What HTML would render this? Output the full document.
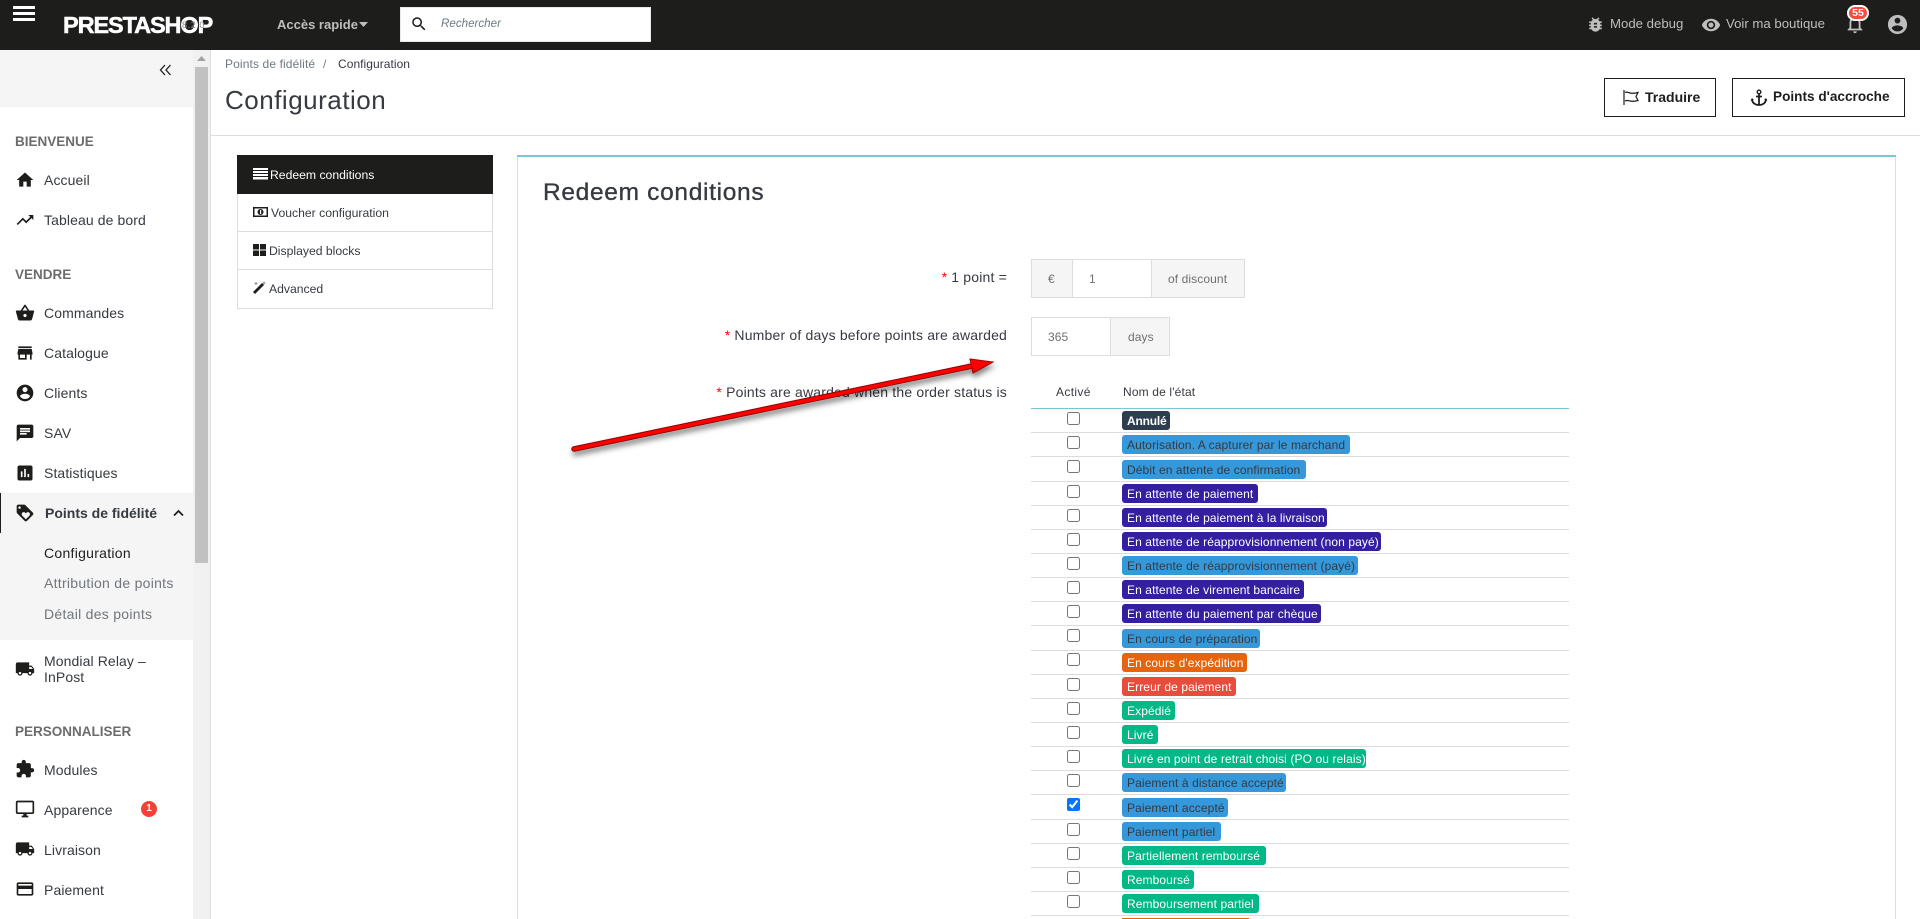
<!DOCTYPE html>
<html lang="fr"><head><meta charset="utf-8"><title>Configuration</title>
<style>
html,body{margin:0;padding:0;width:1920px;height:919px;overflow:hidden;background:#fff;font-family:"Liberation Sans",sans-serif;color:#363a41}
div,span,svg,input{position:absolute;box-sizing:border-box}
#w{left:0;top:0;width:1920px;height:919px;overflow:hidden}
.t{white-space:nowrap;line-height:20px;font-size:14px}
.si{left:44px;color:#363a41;letter-spacing:.1px}
.h{left:15px;font-weight:bold;color:#6c6c6c;font-size:13.500px;letter-spacing:0}
.ic{left:15px;width:20px;height:20px;fill:#1d1d1b}
.sub{left:44px;color:#70767c;font-size:14px;letter-spacing:.28px}
.top{color:#bebebe;font-size:13.200px;top:14px}
.mn{font-size:12.200px;color:#363a41}
.bd{border:1px solid #ddd}
.ad{background:#f5f5f5}
.f{font-size:12px;color:#6f6f6f;line-height:20px;white-space:nowrap;letter-spacing:.1px}
.l{left:1031px;width:538px;height:1px;background:#dcdcdc}
.c{left:1067px;width:13px;height:13px;margin:0}
.b{left:1122px;height:19px;border-radius:3px;font-size:12px;line-height:20px;padding-left:5px;white-space:nowrap;overflow:hidden;letter-spacing:.1px;color:#fff}
.bl{background:#3498db;color:#363a41}.pu{background:#34209e}.gr{background:#01b887}
.or{background:#e8640c}.re{background:#e74c3c}.dk{background:#2c3e50}
.lb{right:913px;font-size:14px;letter-spacing:.18px;line-height:20px;white-space:nowrap;color:#363a41}
.lb b{color:#f00;font-weight:normal}
</style></head><body>
<div id="w">

<!-- header -->
<div style="left:0;top:0;width:1920px;height:50px;background:#1d1d1b"></div>
<div style="left:13px;top:6px;width:22px;height:3px;background:#fff"></div>
<div style="left:13px;top:12px;width:22px;height:3px;background:#fff"></div>
<div style="left:13px;top:18px;width:22px;height:3px;background:#fff"></div>
<div style="left:63px;top:12px;font-size:23.500px;line-height:27px;font-weight:bold;color:#fff;letter-spacing:-1.100px;-webkit-text-stroke:.5px #fff;white-space:nowrap">PRESTASHOP</div>
<div class="t" style="left:182px;top:15px;font-size:9px;color:#8a8a8a;letter-spacing:.6px">8.2.0</div>
<div class="t" style="left:277px;top:15px;color:#bebebe;font-size:13px;font-weight:bold">Accès rapide</div>
<svg style="left:359px;top:22px" width="10" height="6"><path d="M0 0h9L4.500 5z" fill="#bebebe"/></svg>
<div style="left:400px;top:7px;width:251px;height:35px;background:#fff;border:1px solid #e8e8e8"></div>
<svg style="left:410px;top:15px" width="18" height="18" viewBox="0 0 24 24"><path d="M15.500 14h-.79l-.28-.27C15.410 12.590 16 11.110 16 9.500 16 5.910 13.090 3 9.500 3S3 5.910 3 9.500 5.910 16 9.500 16c1.610 0 3.090-.59 4.230-1.570l.27.28v.79l5 4.990L20.490 19l-4.990-5zm-6 0C7.010 14 5 11.990 5 9.500S7.010 5 9.500 5 14 7.010 14 9.500 11.990 14 9.500 14z" fill="#1d1d1b"/></svg>
<div class="t" style="left:441px;top:14px;font-size:11.600px;font-style:italic;color:#6c7a80">Rechercher</div>

<svg style="left:1586px;top:15px" width="19" height="19" viewBox="0 0 24 24"><path fill="#bebebe" d="M20 8h-2.810c-.45-.78-1.070-1.450-1.820-1.960L17 4.410 15.590 3l-2.170 2.170C12.960 5.060 12.490 5 12 5c-.49 0-.96.06-1.410.17L8.410 3 7 4.410l1.620 1.630C7.880 6.550 7.260 7.220 6.810 8H4v2h2.090c-.05.33-.09.66-.09 1v1H4v2h2v1c0 .34.04.67.09 1H4v2h2.810c1.040 1.790 2.970 3 5.190 3s4.150-1.210 5.190-3H20v-2h-2.090c.05-.33.09-.66.09-1v-1h2v-2h-2v-1c0-.34-.04-.67-.09-1H20V8zm-6 8h-4v-2h4v2zm0-4h-4v-2h4v2z"/></svg>
<div class="t top" style="left:1610px">Mode debug</div>
<svg style="left:1701px;top:15px" width="20" height="20" viewBox="0 0 24 24"><path fill="#bebebe" d="M12 4.500C7 4.500 2.730 7.610 1 12c1.730 4.390 6 7.500 11 7.500s9.270-3.110 11-7.500c-1.730-4.390-6-7.500-11-7.500zM12 17c-2.760 0-5-2.240-5-5s2.240-5 5-5 5 2.240 5 5-2.240 5-5 5zm0-8c-1.660 0-3 1.340-3 3s1.340 3 3 3 3-1.340 3-3-1.340-3-3-3z"/></svg>
<div class="t top" style="left:1726px">Voir ma boutique</div>
<svg style="left:1844px;top:13px" width="22" height="22" viewBox="0 0 24 24"><path fill="#bebebe" d="M12 22c1.100 0 2-.9 2-2h-4c0 1.100.9 2 2 2zm6-6v-5c0-3.070-1.630-5.640-4.500-6.320V4c0-.83-.67-1.500-1.500-1.500s-1.500.67-1.500 1.500v.68C7.640 5.360 6 7.920 6 11v5l-2 2v1h16v-1l-2-2zm-2 1H8v-6c0-2.480 1.510-4.500 4-4.500s4 2.020 4 4.500v6z"/></svg>
<div style="left:1847px;top:5px;width:22px;height:16px;border-radius:8px;background:#f54c3e;border:2px solid #fff;color:#fff;font-size:10.500px;font-weight:bold;line-height:12px;text-align:center">55</div>
<svg style="left:1886px;top:13px" width="23" height="23" viewBox="0 0 24 24"><path fill="#bebebe" d="M12 2C6.480 2 2 6.480 2 12s4.480 10 10 10 10-4.480 10-10S17.520 2 12 2zm0 3c1.660 0 3 1.340 3 3s-1.340 3-3 3-3-1.340-3-3 1.340-3 3-3zm0 14.200c-2.500 0-4.710-1.280-6-3.220.03-1.990 4-3.080 6-3.080 1.990 0 5.970 1.090 6 3.080-1.290 1.940-3.500 3.220-6 3.220z"/></svg>

<!-- sidebar -->
<div style="left:0;top:50px;width:193px;height:57px;background:#f5f5f5"></div>
<svg style="left:159px;top:64px" width="13" height="12" viewBox="0 0 13 12"><path d="M6 1L1.500 6 6 11M11.500 1L7 6l4.500 5" fill="none" stroke="#1d1d1b" stroke-width="1.300"/></svg>
<div style="left:193px;top:50px;width:17px;height:869px;background:#f1f1f1"></div>
<div style="left:210px;top:50px;width:1px;height:869px;background:#ddd"></div>
<svg style="left:197px;top:56px" width="9" height="6"><path d="M4.500 0L9 5H0z" fill="#a3a3a3"/></svg>
<div style="left:195px;top:67px;width:13px;height:496px;background:#c1c1c1"></div>
<div style="left:0;top:493px;width:193px;height:147px;background:#f5f5f5"></div>
<div style="left:0;top:493px;width:1px;height:40px;background:#1d1d1b"></div>

<div class="t h" style="top:132px">BIENVENUE</div>
<svg class="ic" style="top:170px" viewBox="0 0 24 24"><path d="M10 20v-6h4v6h5v-8h3L12 3 2 12h3v8z"/></svg>
<div class="t si" style="top:170px">Accueil</div>
<svg class="ic" style="top:210px" viewBox="0 0 24 24"><path d="M16 6l2.290 2.290-4.880 4.880-4-4L2 16.590 3.410 18l6-6 4 4 6.300-6.290L22 12V6z"/></svg>
<div class="t si" style="top:210px">Tableau de bord</div>
<div class="t h" style="top:265px">VENDRE</div>
<svg class="ic" style="top:303px" viewBox="0 0 24 24"><path d="M17.210 9l-4.380-6.560c-.19-.28-.51-.42-.83-.42-.32 0-.64.14-.83.43L6.790 9H2c-.55 0-1 .45-1 1 0 .09.01.18.04.27l2.540 9.270c.23.84 1 1.460 1.920 1.460h13c.92 0 1.690-.62 1.930-1.460l2.540-9.270L23 10c0-.55-.45-1-1-1h-4.790zM9 9l3-4.400L15 9H9zm3 8c-1.100 0-2-.9-2-2s.9-2 2-2 2 .9 2 2-.9 2-2 2z"/></svg>
<div class="t si" style="top:303px">Commandes</div>
<svg class="ic" style="top:343px" viewBox="0 0 24 24"><path d="M20 4H4v2h16V4zm1 10v-2l-1-5H4l-1 5v2h1v6h10v-6h4v6h2v-6h1zm-9 4H6v-4h6v4z"/></svg>
<div class="t si" style="top:343px">Catalogue</div>
<svg class="ic" style="top:383px" viewBox="0 0 24 24"><path d="M12 2C6.480 2 2 6.480 2 12s4.480 10 10 10 10-4.480 10-10S17.520 2 12 2zm0 3c1.660 0 3 1.340 3 3s-1.340 3-3 3-3-1.340-3-3 1.340-3 3-3zm0 14.200c-2.500 0-4.710-1.280-6-3.220.03-1.990 4-3.080 6-3.080 1.990 0 5.970 1.090 6 3.080-1.290 1.940-3.500 3.220-6 3.220z"/></svg>
<div class="t si" style="top:383px">Clients</div>
<svg class="ic" style="top:423px" viewBox="0 0 24 24"><path d="M20 2H4c-1.100 0-1.990.9-1.990 2L2 22l4-4h14c1.100 0 2-.9 2-2V4c0-1.100-.9-2-2-2zM6 9h12v2H6V9zm8 5H6v-2h8v2zm4-6H6V6h12v2z"/></svg>
<div class="t si" style="top:423px">SAV</div>
<svg class="ic" style="top:463px" viewBox="0 0 24 24"><path d="M19 3H5c-1.100 0-2 .9-2 2v14c0 1.100.9 2 2 2h14c1.100 0 2-.9 2-2V5c0-1.100-.9-2-2-2zM9 17H7v-7h2v7zm4 0h-2V7h2v10zm4 0h-2v-4h2v4z"/></svg>
<div class="t si" style="top:463px">Statistiques</div>
<svg class="ic" style="top:503px" viewBox="0 0 24 24"><path d="M21.410 11.580l-9-9C12.050 2.220 11.550 2 11 2H4c-1.100 0-2 .9-2 2v7c0 .55.22 1.050.59 1.420l9 9c.36.36.86.58 1.410.58s1.050-.22 1.410-.59l7-7c.37-.36.59-.86.59-1.410s-.23-1.060-.59-1.420zM5.500 7C4.670 7 4 6.330 4 5.500S4.670 4 5.500 4 7 4.670 7 5.500 6.330 7 5.500 7zm11.770 8.270L13 19.540l-4.270-4.270C8.280 14.810 8 14.190 8 13.500c0-1.380 1.120-2.500 2.500-2.500.69 0 1.320.28 1.770.74l.73.72.73-.73c.45-.45 1.080-.73 1.770-.73 1.380 0 2.500 1.120 2.500 2.500 0 .69-.28 1.320-.73 1.770z"/></svg>
<div class="t si" style="left:45px;top:503px;font-weight:bold;letter-spacing:0">Points de fidélité</div>
<svg style="left:173px;top:509px" width="11" height="8" viewBox="0 0 11 8"><path d="M1 6.500l4.500-4.500L10 6.500" fill="none" stroke="#1d1d1b" stroke-width="1.700"/></svg>
<div class="t sub" style="top:543px;color:#1d1d1b">Configuration</div>
<div class="t sub" style="top:573px">Attribution de points</div>
<div class="t sub" style="top:604px">Détail des points</div>
<svg class="ic" style="top:659px" viewBox="0 0 24 24"><path d="M20 8h-3V4H3c-1.100 0-2 .9-2 2v11h2c0 1.660 1.340 3 3 3s3-1.340 3-3h6c0 1.660 1.340 3 3 3s3-1.340 3-3h2v-5l-3-4zM6 18.500c-.83 0-1.500-.67-1.500-1.500s.67-1.500 1.500-1.500 1.500.67 1.500 1.500-.67 1.500-1.500 1.500zm13.500-9l1.960 2.500H17V9.500h2.500zm-1.500 9c-.83 0-1.500-.67-1.500-1.500s.67-1.500 1.500-1.500 1.500.67 1.500 1.500-.67 1.500-1.500 1.500z"/></svg>
<div class="t si" style="top:651px">Mondial Relay –</div>
<div class="t si" style="top:667px">InPost</div>
<div class="t h" style="top:722px">PERSONNALISER</div>
<svg class="ic" style="top:759px" viewBox="0 0 24 24"><path d="M20.500 11H19V7c0-1.100-.9-2-2-2h-4V3.500C13 2.120 11.880 1 10.500 1S8 2.120 8 3.500V5H4c-1.100 0-1.990.9-1.990 2v3.800H3.500c1.490 0 2.700 1.210 2.700 2.700s-1.210 2.700-2.700 2.700H2V20c0 1.100.9 2 2 2h3.800v-1.500c0-1.490 1.210-2.700 2.700-2.700 1.490 0 2.700 1.210 2.700 2.700V22H17c1.100 0 2-.9 2-2v-4h1.500c1.380 0 2.500-1.120 2.500-2.500S21.880 11 20.500 11z"/></svg>
<div class="t si" style="top:760px">Modules</div>
<svg class="ic" style="top:799px" viewBox="0 0 24 24"><path d="M21 2H3c-1.100 0-2 .9-2 2v12c0 1.100.9 2 2 2h7v2H8v2h8v-2h-2v-2h7c1.100 0 2-.9 2-2V4c0-1.100-.9-2-2-2zm0 14H3V4h18v12z"/></svg>
<div class="t si" style="top:800px">Apparence</div>
<div style="left:141px;top:801px;width:16px;height:16px;border-radius:50%;background:#f44336;color:#fff;font-size:10px;font-weight:bold;line-height:16px;text-align:center">1</div>
<svg class="ic" style="top:839px" viewBox="0 0 24 24"><path d="M20 8h-3V4H3c-1.100 0-2 .9-2 2v11h2c0 1.660 1.340 3 3 3s3-1.340 3-3h6c0 1.660 1.340 3 3 3s3-1.340 3-3h2v-5l-3-4zM6 18.500c-.83 0-1.500-.67-1.500-1.500s.67-1.500 1.500-1.500 1.500.67 1.500 1.500-.67 1.500-1.500 1.500zm13.500-9l1.960 2.500H17V9.500h2.500zm-1.500 9c-.83 0-1.500-.67-1.500-1.500s.67-1.500 1.500-1.500 1.500.67 1.500 1.500-.67 1.500-1.500 1.500z"/></svg>
<div class="t si" style="top:840px">Livraison</div>
<svg class="ic" style="top:879px" viewBox="0 0 24 24"><path d="M20 4H4c-1.110 0-1.990.89-1.990 2L2 18c0 1.110.89 2 2 2h16c1.110 0 2-.89 2-2V6c0-1.110-.89-2-2-2zm0 14H4v-6h16v6zm0-10H4V6h16v2z"/></svg>
<div class="t si" style="top:880px">Paiement</div>

<!-- page head -->
<div class="t" style="left:225px;top:54px;font-size:12px;color:#6c7a80;letter-spacing:.12px">Points de fidélité</div>
<div class="t" style="left:323px;top:54px;font-size:12px;color:#6c868e">/</div>
<div class="t" style="left:338px;top:54px;font-size:12px;color:#363a41;letter-spacing:.05px">Configuration</div>
<div style="left:225px;top:82px;font-size:26px;line-height:36px;color:#363a41;letter-spacing:.5px;white-space:nowrap">Configuration</div>
<div style="left:211px;top:135px;width:1709px;height:1px;background:#dcdcdc"></div>

<div style="left:1604px;top:78px;width:112px;height:39px;border:1px solid #1d1d1b"></div>
<svg style="left:1623px;top:89px" width="17" height="17" viewBox="0 0 17 17"><path d="M1 1v15M2 3.500c2-1 3 0 5 .5s4 .5 8-.5l-2 4 2 4c-4 1-6 1-8 .5s-3-1-5 0" fill="none" stroke="#1d1d1b" stroke-width="1.200"/></svg>
<div class="t" style="left:1645px;top:87px;font-weight:bold;color:#1d1d1b;font-size:14px">Traduire</div>
<div style="left:1732px;top:78px;width:173px;height:39px;border:1px solid #1d1d1b"></div>
<svg style="left:1750px;top:89px" width="18" height="18" viewBox="0 0 18 18"><circle cx="9" cy="3" r="1.800" fill="none" stroke="#1d1d1b" stroke-width="1.400"/><path d="M9 5v11M6 7.500h6M2 10.500c.3 3.500 3.500 5.500 7 5.500s6.700-2 7-5.500" fill="none" stroke="#1d1d1b" stroke-width="1.800"/><path d="M.5 11.500L2 9l2 2zM17.500 11.500L16 9l-2 2z" fill="#1d1d1b"/></svg>
<div class="t" style="left:1773px;top:87px;font-weight:bold;color:#1d1d1b;font-size:13.600px">Points d'accroche</div>

<!-- left menu -->
<div style="left:237px;top:155px;width:256px;height:154px;border:1px solid #ddd;border-top:0"></div>
<div style="left:237px;top:155px;width:256px;height:39px;background:#1d1d1b"></div>
<div style="left:238px;top:231px;width:254px;height:1px;background:#ddd"></div>
<div style="left:238px;top:269px;width:254px;height:1px;background:#ddd"></div>
<svg style="left:253px;top:168px" width="15" height="12"><path d="M0 0h15v2H0zM0 3h15v2H0zM0 6h15v2H0zM0 9h15v2.500H0z" fill="#fff"/></svg>
<div class="t mn" style="left:270px;top:165px;color:#fff">Redeem conditions</div>
<svg style="left:253px;top:207px" width="15" height="10"><rect width="15" height="10" fill="#1d1d1b"/><rect x="1.500" y="1.500" width="12" height="7" fill="#fff"/><circle cx="7.500" cy="5" r="3" fill="#1d1d1b"/><rect x="7" y="3" width="1.200" height="4" fill="#fff"/></svg>
<div class="t mn" style="left:271px;top:203px">Voucher configuration</div>
<svg style="left:253px;top:244px" width="13" height="12"><path d="M0 0h6v5.500H0zM7 0h6v5.500H7zM0 6.500h6V12H0zM7 6.500h6V12H7z" fill="#1d1d1b"/></svg>
<div class="t mn" style="left:269px;top:241px">Displayed blocks</div>
<svg style="left:253px;top:281px" width="13" height="13" viewBox="0 0 13 13"><path d="M1 12L10 3" stroke="#1d1d1b" stroke-width="2.800"/><path d="M11 .5v3M9.500 2h3M3 1v3M1.500 2.500h3" stroke="#777" stroke-width=".8"/></svg>
<div class="t mn" style="left:269px;top:279px">Advanced</div>

<!-- panel -->
<div style="left:517px;top:155px;width:1379px;height:764px;border:1px solid #ddd;border-width:0 1px 0 1px"></div>
<div style="left:517px;top:155px;width:1379px;height:2px;background:#7cc5d9"></div>
<div style="left:543px;top:178px;font-size:24.500px;line-height:30px;color:#363a41;letter-spacing:.68px;white-space:nowrap;font-weight:normal;-webkit-text-stroke:.35px #363a41">Redeem conditions</div>

<div class="lb" style="top:267px"><b>*</b> 1 point =</div>
<div class="lb" style="top:325px"><b>*</b> Number of days before points are awarded</div>
<div class="lb" style="top:382px"><b>*</b> Points are awarded when the order status is</div>

<div class="bd ad" style="left:1031px;top:259px;width:42px;height:39px"></div>
<div class="bd" style="left:1072px;top:259px;width:80px;height:39px"></div>
<div class="bd ad" style="left:1151px;top:259px;width:94px;height:39px"></div>
<div class="f" style="left:1048px;top:269px">€</div>
<div class="f" style="left:1089px;top:269px">1</div>
<div class="f" style="left:1168px;top:269px">of discount</div>
<div class="bd" style="left:1031px;top:317px;width:80px;height:39px"></div>
<div class="bd ad" style="left:1110px;top:317px;width:60px;height:39px"></div>
<div class="f" style="left:1048px;top:327px">365</div>
<div class="f" style="left:1128px;top:327px">days</div>

<div class="f" style="left:1056px;top:382px;color:#363a41;letter-spacing:.35px">Activé</div>
<div class="f" style="left:1123px;top:382px;color:#363a41;letter-spacing:.15px">Nom de l'état</div>
<div style="left:1031px;top:408px;width:538px;height:1px;background:#7cc5d9"></div>

<input type="checkbox" class="c" style="top:412px"><span class="b dk" style="top:411px;width:48px;font-weight:bold;letter-spacing:-.2px">Annulé</span><div class="l" style="top:432px"></div>
<input type="checkbox" class="c" style="top:436px"><span class="b bl" style="top:435px;width:228px">Autorisation. A capturer par le marchand</span><div class="l" style="top:456px"></div>
<input type="checkbox" class="c" style="top:460px"><span class="b bl" style="top:460px;width:184px">Débit en attente de confirmation</span><div class="l" style="top:481px"></div>
<input type="checkbox" class="c" style="top:485px"><span class="b pu" style="top:484px;width:136px">En attente de paiement</span><div class="l" style="top:505px"></div>
<input type="checkbox" class="c" style="top:509px"><span class="b pu" style="top:508px;width:205px">En attente de paiement à la livraison</span><div class="l" style="top:529px"></div>
<input type="checkbox" class="c" style="top:533px"><span class="b pu" style="top:532px;width:259px">En attente de réapprovisionnement (non payé)</span><div class="l" style="top:553px"></div>
<input type="checkbox" class="c" style="top:557px"><span class="b bl" style="top:556px;width:236px">En attente de réapprovisionnement (payé)</span><div class="l" style="top:577px"></div>
<input type="checkbox" class="c" style="top:581px"><span class="b pu" style="top:580px;width:182px">En attente de virement bancaire</span><div class="l" style="top:601px"></div>
<input type="checkbox" class="c" style="top:605px"><span class="b pu" style="top:604px;width:199px">En attente du paiement par chèque</span><div class="l" style="top:625px"></div>
<input type="checkbox" class="c" style="top:629px"><span class="b bl" style="top:629px;width:138px">En cours de préparation</span><div class="l" style="top:650px"></div>
<input type="checkbox" class="c" style="top:653px"><span class="b or" style="top:653px;width:125px">En cours d'expédition</span><div class="l" style="top:674px"></div>
<input type="checkbox" class="c" style="top:678px"><span class="b re" style="top:677px;width:114px">Erreur de paiement</span><div class="l" style="top:698px"></div>
<input type="checkbox" class="c" style="top:702px"><span class="b gr" style="top:701px;width:53px">Expédié</span><div class="l" style="top:722px"></div>
<input type="checkbox" class="c" style="top:726px"><span class="b gr" style="top:725px;width:36px">Livré</span><div class="l" style="top:746px"></div>
<input type="checkbox" class="c" style="top:750px"><span class="b gr" style="top:749px;width:244px">Livré en point de retrait choisi (PO ou relais)</span><div class="l" style="top:770px"></div>
<input type="checkbox" class="c" style="top:774px"><span class="b bl" style="top:773px;width:164px">Paiement à distance accepté</span><div class="l" style="top:794px"></div>
<input type="checkbox" class="c" style="top:798px" checked><span class="b bl" style="top:798px;width:106px">Paiement accepté</span><div class="l" style="top:819px"></div>
<input type="checkbox" class="c" style="top:823px"><span class="b bl" style="top:822px;width:99px">Paiement partiel</span><div class="l" style="top:843px"></div>
<input type="checkbox" class="c" style="top:847px"><span class="b gr" style="top:846px;width:144px">Partiellement remboursé</span><div class="l" style="top:867px"></div>
<input type="checkbox" class="c" style="top:871px"><span class="b gr" style="top:870px;width:72px">Remboursé</span><div class="l" style="top:891px"></div>
<input type="checkbox" class="c" style="top:895px"><span class="b gr" style="top:894px;width:137px">Remboursement partiel</span><div class="l" style="top:915px"></div>
<span class="b or" style="top:918px;width:127px;height:1px;border-radius:0"></span>

<!-- arrow -->
<svg style="left:0;top:0;pointer-events:none" width="1920" height="919">
<g style="filter:drop-shadow(1px 4px 3px rgba(0,0,0,.5))">
<path d="M574 449L972 366" stroke="#900000" stroke-width="5.500" stroke-linecap="round"/>
<path d="M574 449L972 366" stroke="#ff0000" stroke-width="3.600" stroke-linecap="round"/>
<path d="M970 359L993 362L973 373Z" fill="#ff0000" stroke="#a00000" stroke-width="1"/>
</g></svg>
</div>
</body></html>
